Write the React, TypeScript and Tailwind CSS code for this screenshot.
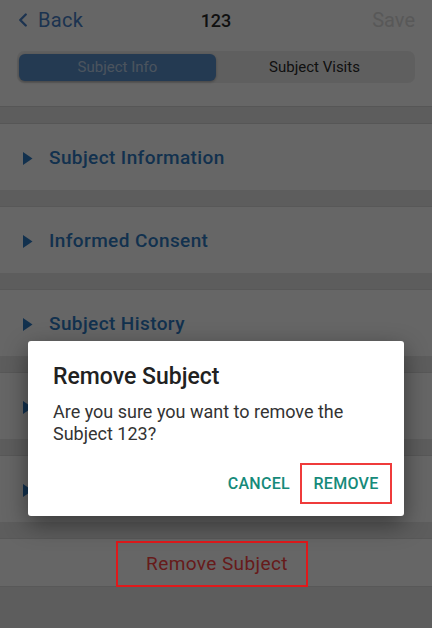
import { ChevronLeft } from 'lucide-react';

const FONT = { fontFamily: 'Roboto, "Noto Sans", Arial, sans-serif' };

const SECCIONES = ['Subject Information', 'Informed Consent', 'Subject History', 'Subject Status', 'Subject Notes'];

function Triangulo() {
  return (
    <svg width="10" height="13" viewBox="0 0 10 13" className="shrink-0">
      <path d="M0 0 L9.5 6.5 L0 13 Z" fill="#2f7bc4" />
    </svg>
  );
}

export default function App() {
  return (
    <main className="relative h-[628px] w-[432px] overflow-hidden bg-[#e9e9e9]" style={FONT}>
      {/* encabezado */}
      <header className="grid h-[40px] grid-cols-3 items-center bg-white px-[17px]">
        <div className="flex items-center gap-[4px] text-[20px] text-[#4780c8]">
          <ChevronLeft size={22} strokeWidth={2.6} className="-ml-[5px]" />
          <span className="tracking-[0.3px]">Back</span>
        </div>
        <span className="text-center text-[18px] font-medium text-[#2a2a2a]">123</span>
        <span className="text-right text-[20px] text-[#dcdcdc]">Save</span>
      </header>

      <div className="bg-white px-[17px] pb-[23px] pt-[11px]">
        <div className="flex h-[32px] items-center rounded-[7px] bg-[#eeeeee] p-[2px]">
          <div className="flex h-[27px] flex-1 items-center justify-center rounded-[6px] bg-[#5a91cd] text-[15px] text-white/60 shadow-[0_1px_3px_rgba(0,0,0,0.3)]">
            Subject Info
          </div>
          <div className="flex h-[27px] flex-1 items-center justify-center text-[15px] text-[#2a2a2a]">
            Subject Visits
          </div>
        </div>
      </div>

      <div className="h-[18px] border-y border-[#d8d8d8] bg-[#e9e9e9]" />

      {SECCIONES.map((titulo) => (
        <section key={titulo}>
          <div className="flex h-[66px] items-center gap-[16px] bg-white pl-[23px] pt-[3px]">
            <Triangulo />
            <h2 className="text-[19px] font-medium tracking-[0.4px] text-[#2f7bc4]">{titulo}</h2>
          </div>
          <div className="h-[17px] border-b border-[#dcdcdc] bg-[#e9e9e9]" />
        </section>
      ))}

      <div className="flex h-[48px] items-center justify-center border-b border-[#dcdcdc] bg-white pt-[3px]">
        <span className="pl-[2px] text-[19px] tracking-[0.4px] text-[#ff4545]">Remove Subject</span>
      </div>

      {/* capa oscura */}
      <div className="absolute inset-0 bg-black/60" />

      <div className="absolute left-[116px] top-[541px] h-[46px] w-[192px] border-2 border-[#e0191b]" />

      {/* dialogo */}
      <div className="absolute left-[28px] top-[341px] h-[175px] w-[376px] rounded-[3px] bg-white shadow-[0_8px_24px_rgba(0,0,0,0.45)]">
        <h3 className="pl-[25px] pt-[21px] text-[23px] font-medium leading-[30px] text-[#212121]">Remove Subject</h3>
        <p className="pl-[25px] pr-[20px] pt-[9px] text-[18px] leading-[22px] text-[#333333]">
          Are you sure you want to remove the Subject 123?
        </p>
        <div className="absolute right-[12px] top-[122px] flex items-center">
          <span className="mr-[0px] px-[10px] text-[16px] font-medium tracking-[0.3px] text-[#168a7a]">CANCEL</span>
          <span className="flex h-[41px] w-[92px] items-center justify-center border-2 border-[#ef3b3b] text-[16px] font-medium tracking-[0.3px] text-[#168a7a]">
            REMOVE
          </span>
        </div>
      </div>
    </main>
  );
}
